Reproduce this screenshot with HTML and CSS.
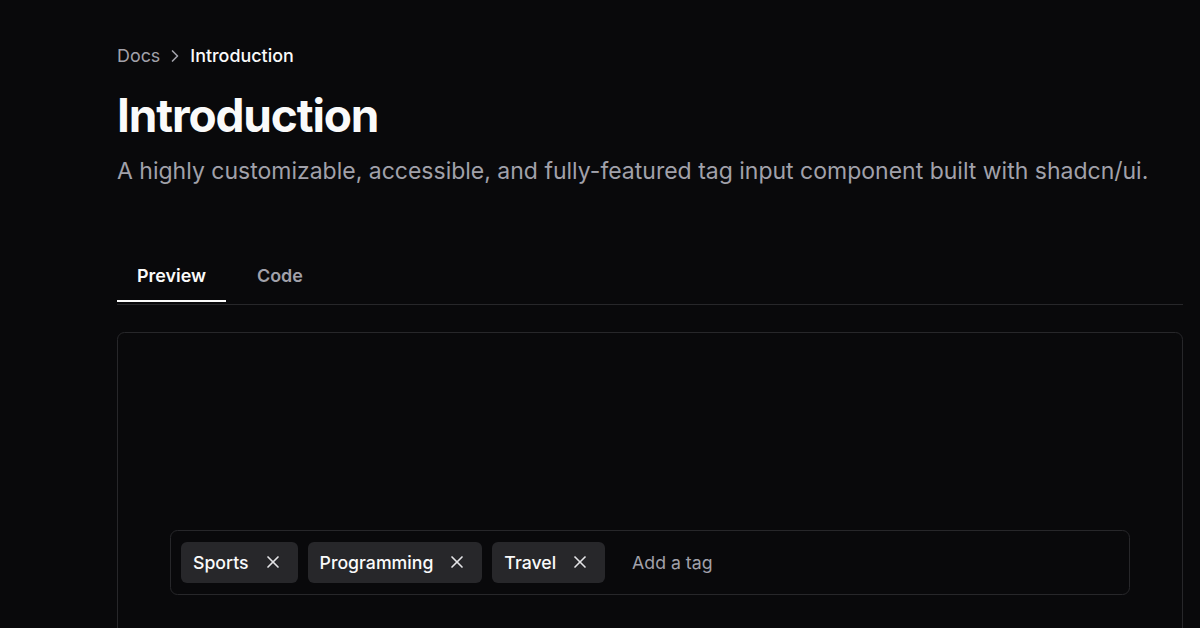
FILE: index.html
```html
<!DOCTYPE html>
<html lang="en">
<head>
<meta charset="utf-8">
<title>Introduction</title>
<link rel="stylesheet" href="styles.css">
</head>
<body>
<main class="page">
  <nav class="crumbs">
    <span class="crumb-link">Docs</span>
    <svg class="chev" viewBox="0 0 24 24" fill="none" stroke="currentColor" stroke-width="2" stroke-linecap="round" stroke-linejoin="round"><path d="m9 18 6-6-6-6"/></svg>
    <span class="crumb-current">Introduction</span>
  </nav>
  <h1 class="title">Introduction</h1>
  <p class="lead">A highly customizable, accessible, and fully-featured tag input component built with shadcn/ui.</p>

  <div class="tabs">
    <div class="tab active">Preview</div>
    <div class="tab">Code</div>
  </div>

  <section class="preview">
    <div class="tag-input">
      <span class="tag">Sports<svg class="x" viewBox="0 0 24 24" fill="none" stroke="currentColor" stroke-width="2" stroke-linecap="round" stroke-linejoin="round"><path d="M18 6 6 18"/><path d="m6 6 12 12"/></svg></span>
      <span class="tag">Programming<svg class="x" viewBox="0 0 24 24" fill="none" stroke="currentColor" stroke-width="2" stroke-linecap="round" stroke-linejoin="round"><path d="M18 6 6 18"/><path d="m6 6 12 12"/></svg></span>
      <span class="tag">Travel<svg class="x" viewBox="0 0 24 24" fill="none" stroke="currentColor" stroke-width="2" stroke-linecap="round" stroke-linejoin="round"><path d="M18 6 6 18"/><path d="m6 6 12 12"/></svg></span>
      <span class="placeholder">Add a tag</span>
    </div>
  </section>
</main>
</body>
</html>
```

FILE: styles.css
```css
html, body {
  margin: 0;
  height: 100%;
  overflow: hidden;
  background: #09090b;
}
body {
  font-family: Inter, "Noto Sans", sans-serif;
  color: #fafafa;
}
.page {
  padding: 43px 17px 0 117px;
}
.crumbs {
  display: flex;
  align-items: center;
  gap: 5px;
  font-size: 17.9px;
  line-height: 25px;
  height: 25px;
}
.crumb-link { color: #a1a1aa; }
.chev { width: 20px; height: 20px; color: #a1a1aa; }
.crumb-current { color: #fafafa; font-weight: 500; }
.title {
  margin: 22px 0 0;
  font-size: 46px;
  line-height: 50px;
  font-weight: 700;
  letter-spacing: -0.025em;
}
.lead {
  margin: 14px 0 0;
  font-size: 23px;
  line-height: 35px;
  color: #a1a1aa;
}
.tabs {
  display: flex;
  margin-top: 61px;
  border-bottom: 1px solid #27272a;
}
.tab {
  padding: 12.5px 20px 12.5px;
  font-size: 17.9px;
  line-height: 25px;
  font-weight: 600;
  color: #a1a1aa;
  border-bottom: 2.5px solid transparent;
  margin-bottom: 1.5px;
  margin-right: 11px;
}
.tab.active {
  color: #fafafa;
  border-bottom-color: #fafafa;
}
.preview {
  margin-top: 27px;
  border: 1px solid #27272a;
  border-radius: 7.5px;
  height: 400px;
  padding: 197px 52px 0;
}
.tag-input {
  display: flex;
  flex-wrap: wrap;
  align-items: center;
  gap: 10px;
  padding: 11px 10px;
  border: 1px solid #27272a;
  border-radius: 7.5px;
}
.tag {
  display: inline-flex;
  align-items: center;
  gap: 14px;
  height: 41px;
  padding: 0 15px 0 12px;
  background: #27272a;
  border-radius: 6px;
  font-size: 17.7px;
  font-weight: 500;
  color: #fafafa;
}
.x { width: 20px; height: 20px; color: #e4e4e7; }
.placeholder {
  padding-left: 17px;
  font-size: 17.7px;
  color: #a1a1aa;
}
```
